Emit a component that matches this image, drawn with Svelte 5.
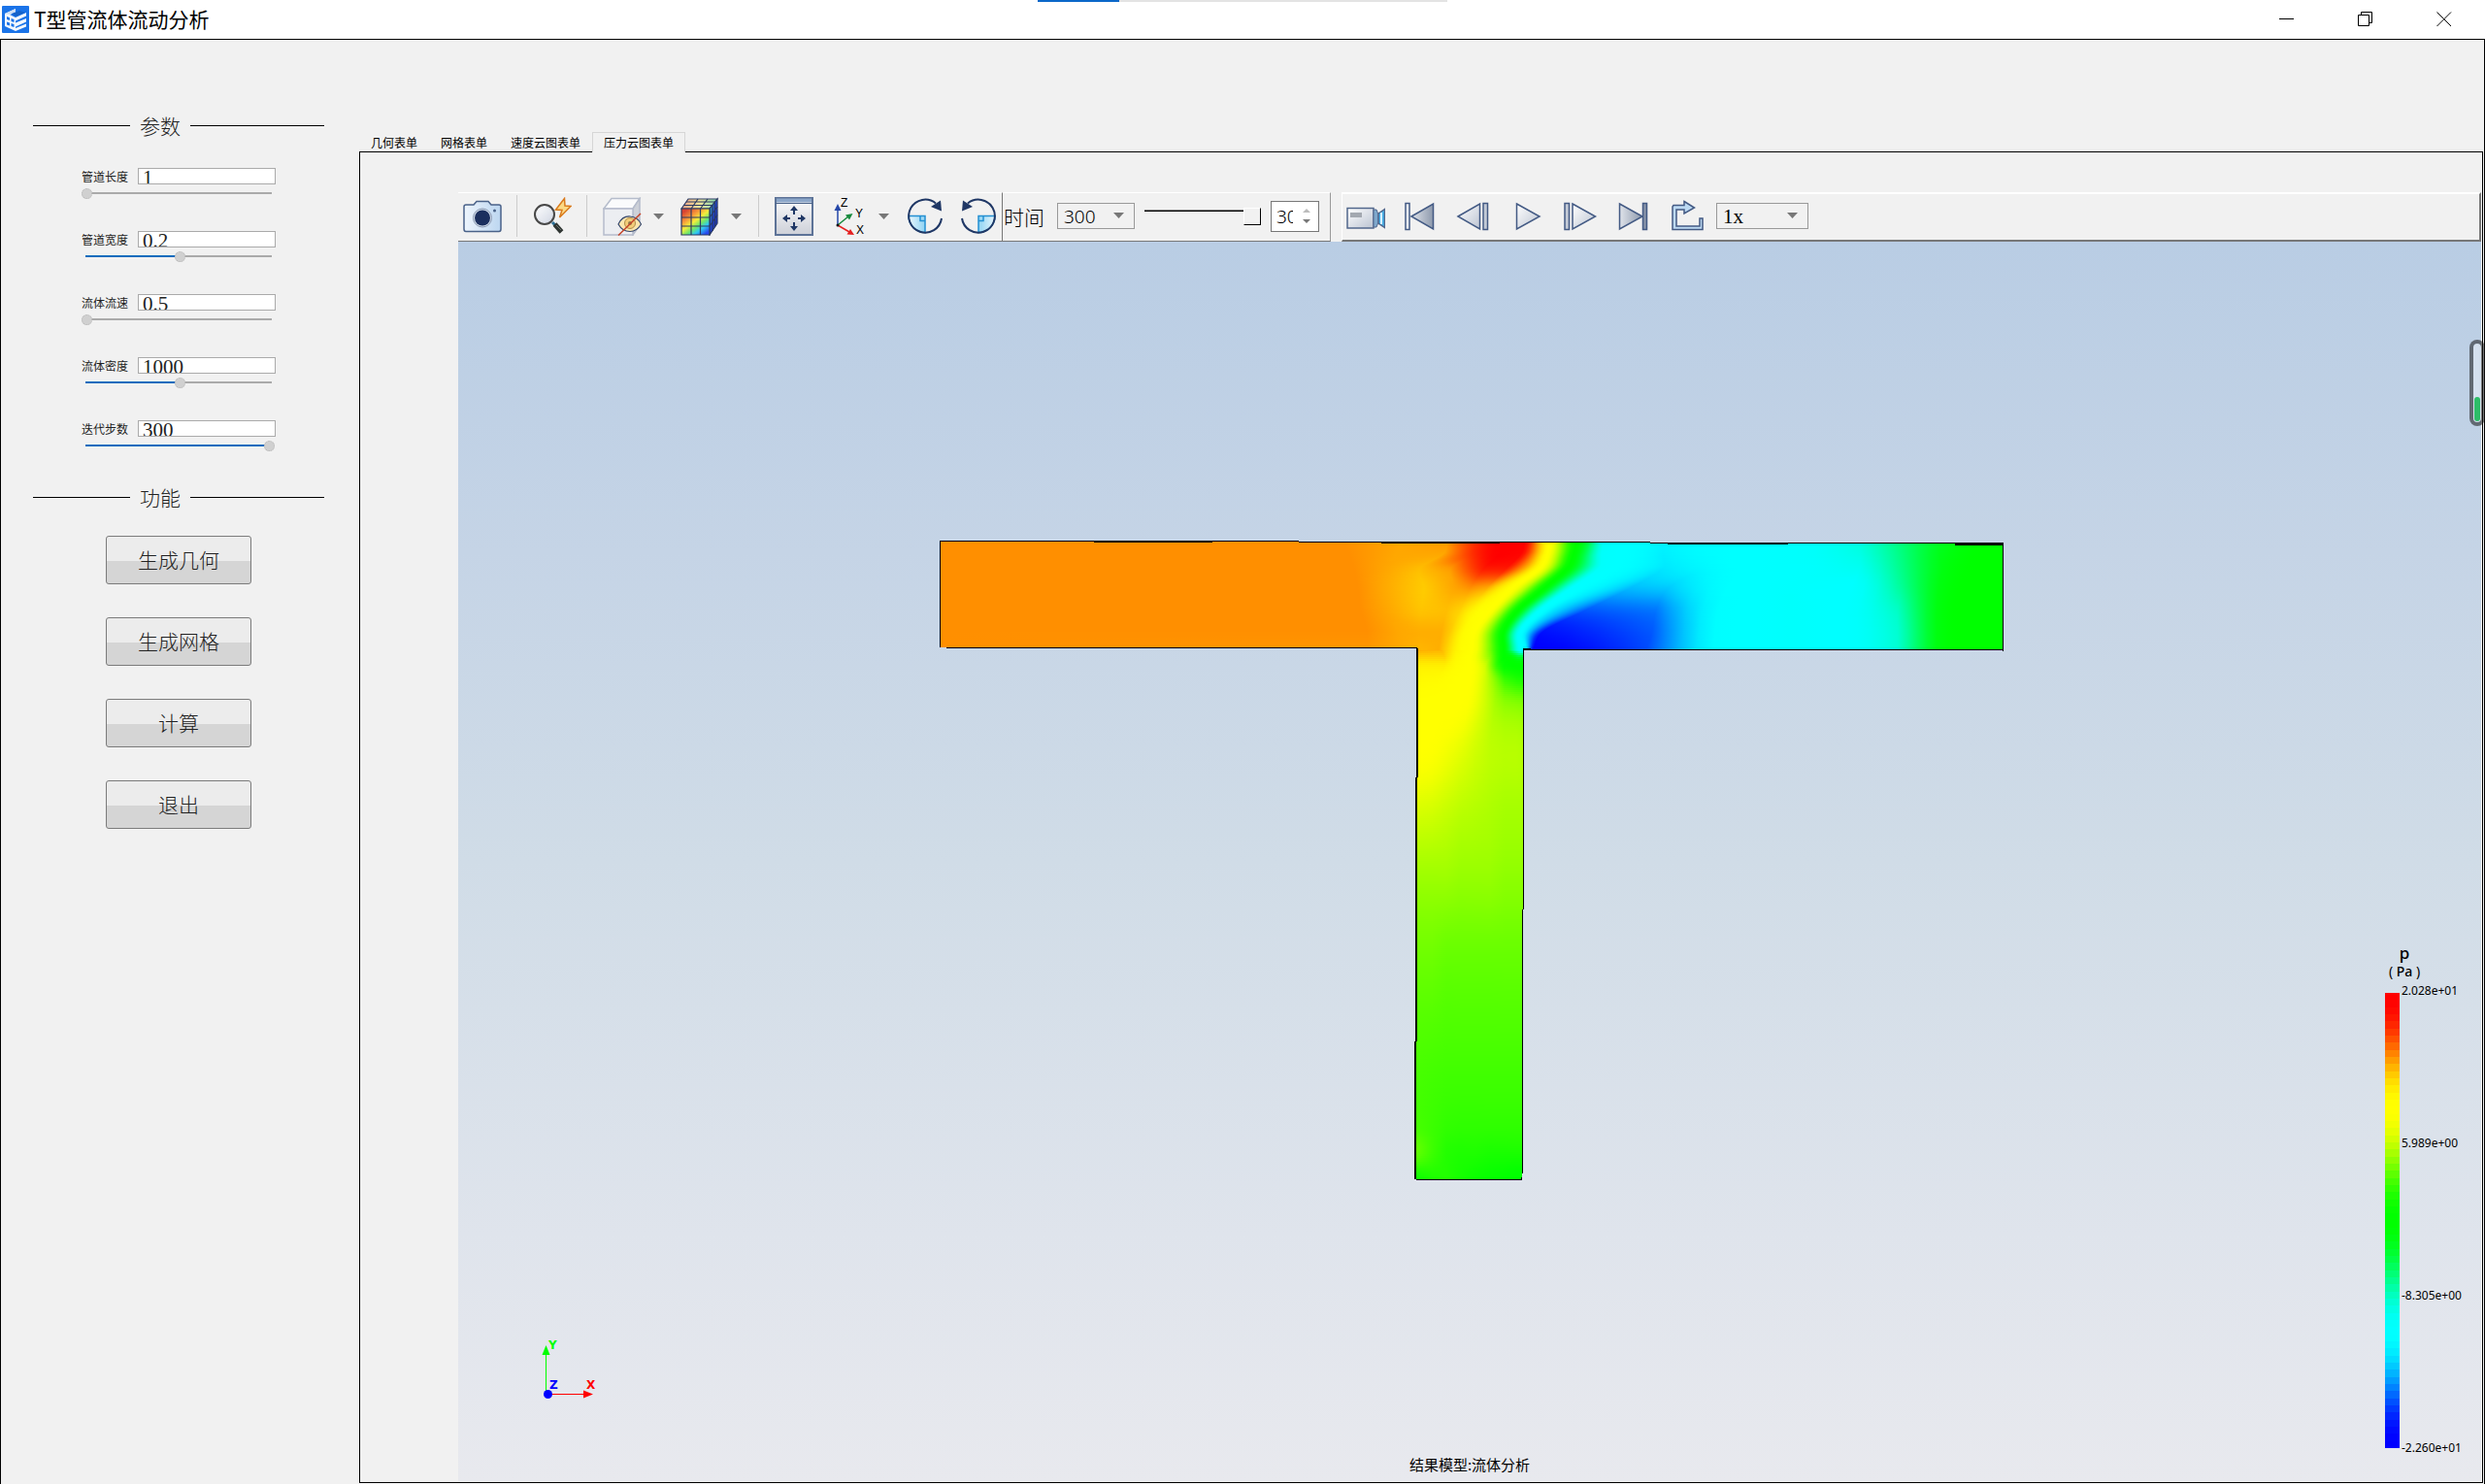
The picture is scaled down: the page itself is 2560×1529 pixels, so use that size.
<script lang="ts">
  type Sample = [number, number];
  type Row = { y: number; samples: Sample[] };

  let params = $state([
    { id: 'length', label: '管道长度', value: '1', position: 0 },
    { id: 'width', label: '管道宽度', value: '0.2', position: 51 },
    { id: 'velocity', label: '流体流速', value: '0.5', position: 0 },
    { id: 'density', label: '流体密度', value: '1000', position: 51 },
    { id: 'steps', label: '迭代步数', value: '300', position: 100 }
  ]);

  const actions = ['生成几何', '生成网格', '计算', '退出'];
  const tabs = ['几何表单', '网格表单', '速度云图表单', '压力云图表单'];
  let activeTab = $state(3);

  const legendLabels = ['2.028e+01', '5.989e+00', '-8.305e+00', '-2.260e+01'];
  const legendSteps = Array.from({ length: 64 }, (_, i) => 1 - i / 63);

  // blue, cyan, green, yellow, red with an eased blend between neighbours
  const palette = [
    [0, 0, 255],
    [0, 255, 255],
    [0, 255, 0],
    [255, 255, 0],
    [255, 0, 0]
  ];

  function colorAt(value: number) {
    const scaled = Math.min(Math.max(value, 0), 1) * 4;
    const index = Math.min(Math.floor(scaled), 3);
    const blend = (1 - Math.cos(Math.PI * (scaled - index))) / 2;
    const rgb = palette[index].map((c, i) => Math.round(c + (palette[index + 1][i] - c) * blend));
    return `rgb(${rgb.join(',')})`;
  }

  // normalised pressure along horizontal cuts: [x, value]
  const pipeRows: Row[] = [
    { y: 557, samples: [[968, 0.865], [1385, 0.865], [1444, 0.85], [1491, 0.86], [1519, 0.93], [1549, 1], [1571, 0.99], [1584, 0.86], [1596, 0.75], [1607, 0.65], [1624, 0.5], [1636, 0.42], [1652, 0.28], [1676, 0.25], [1713, 0.215], [1751, 0.235], [1798, 0.25], [1869, 0.27], [1916, 0.31], [1959, 0.38], [1997, 0.44], [2048, 0.5], [2064, 0.5]] },
    { y: 570, samples: [[968, 0.865], [1390, 0.865], [1438, 0.85], [1487, 0.85], [1517, 0.93], [1545, 1], [1567, 0.98], [1581, 0.86], [1594, 0.75], [1605, 0.65], [1621, 0.5], [1634, 0.4], [1650, 0.27], [1672, 0.25], [1713, 0.21], [1751, 0.23], [1794, 0.25], [1869, 0.27], [1916, 0.3], [1959, 0.375], [1998, 0.45], [2042, 0.5], [2064, 0.5]] },
    { y: 585, samples: [[968, 0.865], [1395, 0.865], [1430, 0.85], [1463, 0.835], [1495, 0.86], [1529, 0.95], [1552, 0.95], [1572, 0.84], [1586, 0.75], [1598, 0.65], [1614, 0.5], [1628, 0.4], [1647, 0.27], [1666, 0.245], [1713, 0.2], [1751, 0.22], [1792, 0.25], [1869, 0.265], [1916, 0.285], [1959, 0.37], [2001, 0.46], [2034, 0.5], [2064, 0.5]] },
    { y: 605, samples: [[968, 0.865], [1399, 0.865], [1433, 0.845], [1467, 0.825], [1497, 0.85], [1515, 0.865], [1532, 0.85], [1545, 0.8], [1559, 0.75], [1572, 0.66], [1591, 0.5], [1605, 0.38], [1619, 0.265], [1638, 0.23], [1680, 0.165], [1719, 0.175], [1780, 0.245], [1846, 0.265], [1907, 0.25], [1959, 0.36], [1997, 0.46], [2025, 0.5], [2064, 0.5]] },
    { y: 628, samples: [[968, 0.865], [1402, 0.865], [1430, 0.85], [1464, 0.83], [1490, 0.835], [1504, 0.82], [1515, 0.79], [1524, 0.765], [1536, 0.75], [1549, 0.64], [1564, 0.5], [1575, 0.38], [1586, 0.265], [1600, 0.2], [1634, 0.1], [1706, 0.12], [1770, 0.24], [1846, 0.268], [1900, 0.25], [1955, 0.33], [1995, 0.46], [2018, 0.5], [2064, 0.5]] },
    { y: 650, samples: [[968, 0.865], [1408, 0.865], [1440, 0.85], [1464, 0.845], [1485, 0.845], [1494, 0.825], [1501, 0.8], [1508, 0.77], [1520, 0.75], [1535, 0.63], [1549, 0.5], [1557, 0.38], [1565, 0.27], [1573, 0.2], [1590, 0.04], [1702, 0.1], [1767, 0.24], [1846, 0.268], [1900, 0.25], [1955, 0.32], [1995, 0.46], [2018, 0.5], [2064, 0.5]] },
    { y: 669, samples: [[968, 0.865], [1408, 0.86], [1440, 0.85], [1464, 0.84], [1482, 0.845], [1490, 0.82], [1498, 0.79], [1505, 0.765], [1517, 0.75], [1535, 0.62], [1549, 0.5], [1557, 0.38], [1565, 0.27], [1572, 0.22], [1579, 0], [1696, 0.09], [1765, 0.235], [1846, 0.268], [1900, 0.25], [1955, 0.32], [1995, 0.46], [2018, 0.5], [2064, 0.5]] }
  ];

  const branchRows: Row[] = [
    { y: 669, samples: [[1456, 0.845], [1485, 0.84], [1500, 0.785], [1517, 0.75], [1535, 0.62], [1549, 0.5], [1558, 0.38], [1566, 0.27], [1572, 0.25]] },
    { y: 676, samples: [[1456, 0.82], [1488, 0.82], [1500, 0.775], [1515, 0.75], [1535, 0.63], [1549, 0.5], [1556, 0.48], [1564, 0.43], [1572, 0.42]] },
    { y: 685, samples: [[1456, 0.79], [1488, 0.79], [1500, 0.765], [1515, 0.75], [1530, 0.68], [1542, 0.57], [1550, 0.52], [1562, 0.5], [1572, 0.49]] },
    { y: 700, samples: [[1456, 0.775], [1480, 0.77], [1500, 0.755], [1515, 0.745], [1530, 0.68], [1542, 0.62], [1550, 0.58], [1562, 0.56], [1572, 0.55]] },
    { y: 725, samples: [[1456, 0.755], [1480, 0.75], [1500, 0.75], [1512, 0.735], [1526, 0.69], [1540, 0.65], [1550, 0.635], [1562, 0.63], [1572, 0.625]] },
    { y: 770, samples: [[1456, 0.75], [1475, 0.74], [1490, 0.72], [1505, 0.7], [1520, 0.68], [1535, 0.665], [1550, 0.66], [1562, 0.66], [1572, 0.655]] },
    { y: 830, samples: [[1456, 0.69], [1475, 0.685], [1490, 0.675], [1505, 0.665], [1520, 0.66], [1535, 0.655], [1550, 0.65], [1562, 0.65], [1572, 0.65]] },
    { y: 900, samples: [[1456, 0.645], [1475, 0.645], [1490, 0.645], [1505, 0.64], [1520, 0.64], [1535, 0.64], [1550, 0.635], [1562, 0.635], [1572, 0.635]] },
    { y: 980, samples: [[1456, 0.615], [1475, 0.615], [1490, 0.61], [1505, 0.61], [1520, 0.61], [1535, 0.61], [1550, 0.61], [1562, 0.61], [1572, 0.61]] },
    { y: 1100, samples: [[1456, 0.59], [1475, 0.587], [1490, 0.585], [1505, 0.585], [1520, 0.585], [1535, 0.585], [1550, 0.585], [1562, 0.585], [1572, 0.585]] },
    { y: 1160, samples: [[1456, 0.59], [1475, 0.58], [1490, 0.572], [1505, 0.57], [1520, 0.57], [1535, 0.57], [1550, 0.57], [1562, 0.57], [1572, 0.57]] },
    { y: 1188, samples: [[1456, 0.61], [1475, 0.58], [1490, 0.56], [1505, 0.555], [1520, 0.555], [1535, 0.55], [1550, 0.55], [1562, 0.55], [1572, 0.55]] },
    { y: 1216, samples: [[1456, 0.52], [1475, 0.55], [1490, 0.56], [1505, 0.545], [1520, 0.53], [1535, 0.52], [1550, 0.51], [1562, 0.5], [1572, 0.5]] }
  ];

  const mix = (a: number, b: number, t: number) => a + (b - a) * t;

  // cubic Hermite blend of one sample coordinate between row i and row i + 1
  function blendRows(rows: Row[], i: number, t: number, column: number, part: 0 | 1) {
    const get = (n: number) => rows[n].samples[column][part];
    const slope = (n: number) => {
      const a = Math.max(n - 1, 0);
      const b = Math.min(n + 1, rows.length - 1);
      return (get(b) - get(a)) / (rows[b].y - rows[a].y);
    };
    const span = rows[i + 1].y - rows[i].y;
    const t2 = t * t;
    const t3 = t2 * t;
    return (
      (2 * t3 - 3 * t2 + 1) * get(i) +
      (t3 - 2 * t2 + t) * span * slope(i) +
      (3 * t2 - 2 * t3) * get(i + 1) +
      (t3 - t2) * span * slope(i + 1)
    );
  }

  function buildStrips(rows: Row[], step: number) {
    const first = rows[0].y;
    const last = rows[rows.length - 1].y;
    const left = rows[0].samples[0][0];
    const right = rows[0].samples[rows[0].samples.length - 1][0];
    const strips = [];

    for (let y = first; y < last; y += step) {
      const above = rows.findIndex((row) => row.y > y) - 1;
      const t = (y - rows[above].y) / (rows[above + 1].y - rows[above].y);
      const samples = rows[0].samples.map((_, column) => [
        blendRows(rows, above, t, column, 0),
        blendRows(rows, above, t, column, 1)
      ]);

      const stops = [];
      samples.forEach(([x, v], i) => {
        const [nextX, nextV] = samples[i + 1] ?? [x, v];
        for (const part of [0, 0.25, 0.5, 0.75]) {
          stops.push({
            offset: (mix(x, nextX, part) - left) / (right - left),
            color: colorAt(mix(v, nextV, part))
          });
        }
      });
      strips.push({ y, left, width: right - left, height: step, stops });
    }
    return strips;
  }

  const strips = [...buildStrips(branchRows, 2), ...buildStrips(pipeRows, 1)];
  const outline = '968,557 2063,560 2063,670 1570,669 1568,1216 1458,1215 1460,668 968,667';
</script>

{#snippet caret()}
  <svg class="caret" viewBox="0 0 13 8" aria-hidden="true">
    <path d="M1 1H12L6.500 7Z" fill="#777" />
  </svg>
{/snippet}

<div class="window">
  <div class="loading"><span></span></div>

  <header class="titlebar">
    <svg class="logo" viewBox="0 0 28 28" aria-hidden="true">
      <rect width="28" height="28" rx="1" fill="#1a73e8" />
      <path d="M3 8 14 3V6.500L8 9 14 12 25 7V10.500L14 15.500V17.500L25 13V16.500L14 21.500V23L25 18.500V21.500L14 26 3 21Z" fill="#f4f8fd" />
      <path d="M5 11 8 12.200V15L5 14ZM9.500 13 12.500 14V17L9.500 16ZM5 16.500 8 17.500V20.500L5 19.500ZM9.500 18 12.500 19V22L9.500 21Z" fill="#1a73e8" />
      <path d="M3 8 14 3V6.500L8 9Z" fill="#cfe0f5" />
      <path d="M10 8 18 5 24 7 14 11Z" fill="#1663c9" />
    </svg>
    <h1>T型管流体流动分析</h1>
    <div class="window-buttons">
      <button aria-label="最小化">
        <svg viewBox="0 0 16 16"><path d="M0 7.500H15" /></svg>
      </button>
      <button aria-label="还原">
        <svg viewBox="0 0 16 16"><path d="M.5 3.500H11.500V14.500H.5ZM3.500 3.500V.5H14.500V11.500H11.500" /></svg>
      </button>
      <button aria-label="关闭">
        <svg viewBox="0 0 16 16"><path d="M.5 .5 15 15M15 .5 .5 15" /></svg>
      </button>
    </div>
  </header>

  <div class="body">
    <aside>
      <h2>参数</h2>
      <div class="fields">
        {#each params as param}
          <div class="field">
            <label for={param.id}>{param.label}</label>
            <input class="value" id={param.id} type="text" bind:value={param.value} />
            <input
              class="range"
              type="range"
              min="0"
              max="100"
              aria-label={param.label}
              bind:value={param.position}
              style="--fill: {param.position}%"
            />
          </div>
        {/each}
      </div>

      <h2>功能</h2>
      <div class="actions">
        {#each actions as action}
          <button>{action}</button>
        {/each}
      </div>
    </aside>

    <main>
      <div class="tabs" role="tablist">
        {#each tabs as tab, i}
          <button
            role="tab"
            aria-selected={i === activeTab}
            class:active={i === activeTab}
            onclick={() => (activeTab = i)}
          >{tab}</button>
        {/each}
      </div>

      <div class="pane">
        <div class="toolbars">
          <div class="toolbar view-tools">
            <button aria-label="截图">
              <svg viewBox="0 0 40 40">
                <defs>
                  <linearGradient id="camera" x1="0" y1="0" x2="1" y2="0">
                    <stop offset="0" stop-color="#eef5fd" />
                    <stop offset="1" stop-color="#bcd6f0" />
                  </linearGradient>
                </defs>
                <path d="M3 8H11L14 4.500H26L29 8H37Q39 8 39 10V33Q39 35.500 37 35.500H3Q1 35.500 1 33V10Q1 8 3 8Z" fill="url(#camera)" stroke="#4a6289" stroke-width="1.500" />
                <circle cx="20" cy="21.500" r="9.500" fill="#d3deeb" stroke="#8796b0" />
                <circle cx="20" cy="21.500" r="8" fill="#1b2f5e" />
                <circle cx="32.500" cy="14" r="1.500" fill="#4a6289" />
              </svg>
            </button>
            <span class="separator"></span>
            <button aria-label="快速缩放">
              <svg viewBox="0 0 40 40">
                <defs>
                  <linearGradient id="glass" x1="0" y1="0" x2="1" y2="1">
                    <stop offset="0" stop-color="#fff" />
                    <stop offset="1" stop-color="#cfd5e2" />
                  </linearGradient>
                </defs>
                <path d="M20 26 23 29" stroke="#2b6f96" stroke-width="3" />
                <path d="M22.500 28 29.500 36" stroke="#2f3532" stroke-width="5" />
                <path d="M24 29 29 34" stroke="#6d746f" stroke-width="1" />
                <circle cx="12" cy="18" r="10" fill="url(#glass)" stroke="#474747" stroke-width="2" />
                <path d="M32.500 1.500 23.500 13 30 13.500 27.500 21 39 9.500 33 9Z" fill="#fbd984" stroke="#d97a1c" stroke-width="1.500" />
              </svg>
            </button>
            <span class="separator"></span>
            <div class="dropdown">
              <button aria-label="显示与隐藏">
                <svg viewBox="0 0 40 40">
                  <path d="M1 12 9 1.500H38L31 12Z" fill="#fafbfc" stroke="#b5bccb" stroke-width="1.500" />
                  <path d="M31 12 38 1.500V29L31 39Z" fill="#cdd1d8" stroke="#b5bccb" stroke-width="1.500" />
                  <path d="M1 12H31V39H1Z" fill="#eceef2" stroke="#b5bccb" stroke-width="1.500" />
                  <path d="M16 28Q20 19.500 28 20Q36 20.500 39.500 28Q35 35.500 28 35.500Q20 35.500 16 28Z" fill="#fbe6ae" stroke="#35476e" stroke-width="1.200" />
                  <circle cx="28" cy="27" r="5.500" fill="#f3cd79" stroke="#b08d4a" />
                  <circle cx="28" cy="27" r="2" fill="#8f7b4e" />
                  <path d="M16 39.500 39 17" stroke="#c4452a" stroke-width="1.500" />
                </svg>
              </button>
              <button class="more" aria-label="更多显示选项">{@render caret()}</button>
            </div>
            <div class="dropdown">
              <button aria-label="云图">
                <svg viewBox="0 0 40 40">
                  <defs>
                    <linearGradient id="front" x1="0" y1="0" x2=".8" y2="1">
                      <stop offset=".12" stop-color="#d94432" />
                      <stop offset=".35" stop-color="#f79a3a" />
                      <stop offset=".52" stop-color="#f4ee3c" />
                      <stop offset=".68" stop-color="#6fe66a" />
                      <stop offset=".82" stop-color="#2fc9f2" />
                      <stop offset="1" stop-color="#2a49ee" />
                    </linearGradient>
                    <linearGradient id="lid">
                      <stop offset="0" stop-color="#ee9f86" />
                      <stop offset=".5" stop-color="#f3e49a" />
                      <stop offset="1" stop-color="#7fd8b0" />
                    </linearGradient>
                    <linearGradient id="side" x1="0" y1="0" x2="1" y2="1">
                      <stop offset="0" stop-color="#3bc3a0" />
                      <stop offset=".5" stop-color="#2143d8" />
                      <stop offset="1" stop-color="#1324a0" />
                    </linearGradient>
                  </defs>
                  <g stroke="#2b3a63" stroke-width="1.200">
                    <path d="M1 12 8 2H38L30 12Z" fill="url(#lid)" />
                    <path d="M30 12 38 2V27L30 39Z" fill="url(#side)" />
                    <path d="M1 12H30V39H1Z" fill="url(#front)" />
                    <path d="M11 12V39M20.500 12V39M1 21H30L38 10M1 30H30L38 18.500M11 12 18 2M20.500 12 28 2M4 8.500H33V35M6 5H35.500V31" fill="none" />
                  </g>
                </svg>
              </button>
              <button class="more" aria-label="更多云图选项">{@render caret()}</button>
            </div>
            <span class="separator"></span>
            <button aria-label="适应窗口">
              <svg viewBox="0 0 40 40">
                <defs>
                  <linearGradient id="fit" x1="0" y1="0" x2="0" y2="1">
                    <stop offset="0" stop-color="#fbfbfc" />
                    <stop offset="1" stop-color="#cdd0d8" />
                  </linearGradient>
                </defs>
                <rect x="1" y="1" width="38" height="38" fill="url(#fit)" stroke="#5d7397" stroke-width="2" />
                <path d="M2 3.500H38" stroke="#8ba6c9" stroke-width="4" />
                <path d="M1 6.500H39" stroke="#4a6289" />
                <path d="M20 12V18M20 26V32M10 22H16M24 22H30" stroke="#1f3765" stroke-width="2" />
                <path d="M20 9 24 14H16ZM20 35 24 30H16ZM8 22 13 18V26ZM32 22 27 18V26Z" fill="#1f3765" />
              </svg>
            </button>
            <div class="dropdown">
              <button aria-label="视图方向">
                <svg viewBox="0 0 40 40">
                  <path d="M10 29V12" stroke="#2547a8" stroke-width="1.500" />
                  <path d="M10 7 13.500 14H6.500Z" fill="#2547a8" />
                  <path d="M10 29 21 20" stroke="#168a3c" stroke-width="1.500" />
                  <path d="M25.500 17 22 23.500 18 18.500Z" fill="#168a3c" />
                  <path d="M10 29 22 36" stroke="#e52020" stroke-width="1.500" />
                  <path d="M27 39 19.500 38.500 23 33Z" fill="#e52020" />
                  <circle cx="10" cy="29" r="1.500" fill="#111" />
                  <g class="axis-letters">
                    <text x="13" y="10">Z</text>
                    <text x="28" y="21">Y</text>
                    <text x="29" y="38">X</text>
                  </g>
                </svg>
              </button>
              <button class="more" aria-label="更多视图方向">{@render caret()}</button>
            </div>
            {#each ['顺时针旋转', '逆时针旋转'] as label, i}
              <button aria-label={label}>
                <svg viewBox="0 0 40 40" class:mirrored={i === 1}>
                  <defs>
                    <linearGradient id="wedge{i}">
                      <stop offset="0" stop-color="#eaf7fd" />
                      <stop offset="1" stop-color="#8fd3f3" />
                    </linearGradient>
                  </defs>
                  <path d="M20 19.500H3A17 17 0 0 0 20 36.500Z" fill="url(#wedge{i})" stroke="#2490d2" stroke-width="1.500" />
                  <path d="M15 19.500V24.500H20" fill="none" stroke="#2490d2" stroke-width="1.500" />
                  <path d="M37 22A17 17 0 1 1 31 6.500" fill="none" stroke="#1f3765" stroke-width="2" />
                  <path d="M36 3.500 37 14.500 26 10Z" fill="#1f3765" />
                </svg>
              </button>
            {/each}
          </div>

          <div class="toolbar time-tools">
            <label for="time">时间</label>
            <div class="select time">
              <select id="time"><option>300</option></select>
              {@render caret()}
            </div>
            <input class="time-slider" type="range" min="0" max="300" value="300" aria-label="时间步" />
            <div class="spin">
              <input type="text" value="300" aria-label="时间步数值" />
              <div class="spin-buttons">
                <button class="up" aria-label="增加" disabled></button>
                <button class="down" aria-label="减少"></button>
              </div>
            </div>
          </div>

          <div class="toolbar playback">
            <div class="players">
              <button aria-label="录制">
                <svg viewBox="0 0 40 40">
                  <defs>
                    <linearGradient id="metal" x1="0" y1="0" x2="1" y2="1">
                      <stop offset="0" stop-color="#fff" />
                      <stop offset="1" stop-color="#bcc4d2" />
                    </linearGradient>
                    <linearGradient id="steel">
                      <stop offset="0" stop-color="#dfe3ea" />
                      <stop offset="1" stop-color="#8d99ac" />
                    </linearGradient>
                  </defs>
                  <rect x="1" y="11.500" width="27" height="20.500" fill="url(#metal)" stroke="#52678c" stroke-width="1.500" />
                  <rect x="4" y="16" width="12" height="5" fill="#a3a8b0" />
                  <path d="M28 13H31L33 18V26L31 31H28Z" fill="#7fa8cc" stroke="#52678c" />
                  <path d="M33 17 39.500 12.500V31.500L33 27Z" fill="#49b1e8" stroke="#52678c" stroke-width="1.500" />
                  <path d="M36 16V28" stroke="#d8f1fd" stroke-width="2" />
                </svg>
              </button>
              <button aria-label="第一帧">
                <svg viewBox="0 0 40 40" class="play-icon">
                  <path d="M6 6.500H10V33.500H6Z" fill="#eef0f4" />
                  <path d="M12 20 34.500 7V33Z" fill="url(#steel)" />
                </svg>
              </button>
              <button aria-label="上一帧">
                <svg viewBox="0 0 40 40" class="play-icon">
                  <path d="M5 20 27.500 7V33Z" fill="url(#metal)" />
                  <path d="M31 6.500H35.500V33.500H31Z" fill="#c3cad6" />
                </svg>
              </button>
              <button aria-label="播放">
                <svg viewBox="0 0 40 40" class="play-icon">
                  <path d="M10.500 7 34 20 10.500 33Z" fill="url(#metal)" />
                </svg>
              </button>
              <button aria-label="下一帧">
                <svg viewBox="0 0 40 40" class="play-icon">
                  <path d="M5 6.500H9.500V33.500H5Z" fill="#c3cad6" />
                  <path d="M13 7 36.500 20 13 33Z" fill="url(#metal)" />
                </svg>
              </button>
              <button aria-label="最后一帧">
                <svg viewBox="0 0 40 40" class="play-icon">
                  <path d="M6.500 7 30 20 6.500 33Z" fill="url(#steel)" />
                  <path d="M30.500 6.500H34.500V33.500H30.500Z" fill="#8793a8" />
                </svg>
              </button>
              <button aria-label="循环">
                <svg viewBox="0 0 40 40" class="play-icon">
                  <path d="M18 4.500 28.500 11 18 17V13H10V30H34V22H37V33.500H6V10L7 8.500H18Z" fill="#bcd9f2" />
                </svg>
              </button>
            </div>
            <div class="select speed">
              <select aria-label="播放速度"><option>1x</option></select>
              {@render caret()}
            </div>
          </div>
        </div>

        <div class="viewport">
          <svg class="scene" viewBox="472 249 2084 1277" role="img" aria-label="压力云图">
            <defs>
              <clipPath id="pipe"><polygon points={outline} /></clipPath>
              {#each strips as strip, i}
                <linearGradient id="strip{i}">
                  {#each strip.stops as stop}
                    <stop offset={stop.offset} stop-color={stop.color} />
                  {/each}
                </linearGradient>
              {/each}
            </defs>
            <g clip-path="url(#pipe)" shape-rendering="crispEdges">
              {#each strips as strip, i}
                <rect x={strip.left} y={strip.y} width={strip.width} height={strip.height + 1} fill="url(#strip{i})" />
              {/each}
            </g>
            <polygon class="edge" points={outline} />
            <path class="edge thick" d="M1460 668 1458 1215M1127 558H1249M1423 559H1545M1718 560H1842M2014 561H2063" />

            <g class="triad">
              <path d="M562.500 1436V1394" stroke="#0f0" />
              <path d="M562.500 1386 566.500 1396H558.500Z" fill="#0f0" />
              <path d="M568 1436.500H602" stroke="red" />
              <path d="M611 1436.500 601 1440.500V1432.500Z" fill="red" />
              <circle cx="564.500" cy="1436.500" r="4.500" fill="#00f" />
              <text x="565" y="1390" fill="#0f0">Y</text>
              <text x="604" y="1431" fill="red">X</text>
              <text x="566" y="1431" fill="#00f">Z</text>
            </g>
          </svg>

          <div class="legend">
            <div class="legend-title">
              <span class="quantity">p</span>
              <span>( <b>Pa</b> )</span>
            </div>
            <div class="legend-scale">
              <div class="colors">
                {#each legendSteps as step}
                  <i style="background: {colorAt(step)}"></i>
                {/each}
              </div>
              <div class="legend-labels">
                {#each legendLabels as label}
                  <span>{label}</span>
                {/each}
              </div>
            </div>
          </div>

          <p class="caption">结果模型:流体分析</p>
        </div>
      </div>
    </main>
  </div>

  <div class="gauge"><span></span></div>
</div>

<style>
  :global(body) {
    background: #f1f1f1;
  }

  .window {
    position: relative;
    display: flex;
    flex-direction: column;
    min-height: 100vh;
    box-sizing: border-box;
    overflow: hidden;
    background: #f1f1f1;
    color: #000;
    font-family: 'Noto Sans CJK SC', 'Noto Sans', sans-serif;
  }

  button,
  input,
  select {
    margin: 0;
    padding: 0;
    border: 0;
    background: none;
    color: inherit;
    font: inherit;
    box-sizing: border-box;
  }

  svg {
    display: block;
    flex: none;
  }

  .loading {
    position: absolute;
    top: 0;
    left: 50%;
    width: 422px;
    height: 2px;
    margin-left: -211px;
    background: #e3e3e3;
  }

  .loading span {
    display: block;
    width: 20%;
    height: 100%;
    background: #0b67c9;
  }

  .titlebar {
    display: flex;
    align-items: center;
    height: 40px;
    padding-left: 2px;
    background: #fff;
  }

  .logo {
    width: 28px;
    height: 28px;
  }

  h1 {
    flex: 1;
    margin: 0 0 0 5px;
    padding-bottom: 2px;
    font-size: 21px;
    font-weight: 400;
    line-height: 30px;
  }

  .window-buttons {
    display: flex;
    padding-right: 2px;
  }

  .window-buttons button {
    display: flex;
    align-items: center;
    justify-content: center;
    width: 81px;
    height: 40px;
  }

  .window-buttons svg {
    width: 16px;
    height: 16px;
    fill: none;
    stroke: #000;
  }

  .body {
    display: flex;
    flex: 1;
    border: 1px solid #000;
    border-bottom: 0;
  }

  aside {
    flex: none;
    width: 369px;
    box-sizing: border-box;
    padding: 73px 36px 0 33px;
  }

  h2 {
    display: flex;
    align-items: center;
    gap: 10px;
    margin: 0;
    color: #222;
    font-size: 21px;
    font-weight: 300;
    line-height: 30px;
  }

  h2::before,
  h2::after {
    content: '';
    width: 100px;
    height: 1px;
    background: #000;
  }

  h2::after {
    flex: 1;
  }

  .fields {
    display: flex;
    flex-direction: column;
    gap: 33px;
    margin: 29px 0 32px;
    padding-left: 50px;
  }

  .field {
    display: grid;
    grid-template-columns: 48px 142px;
    gap: 4px 10px;
  }

  .field label {
    color: #222;
    font-size: 12px;
    line-height: 17px;
    white-space: nowrap;
  }

  .value {
    height: 17px;
    padding: 3px 4px 0;
    border: 1px solid #aaa;
    background: #fff;
    color: #222;
    font-family: 'Liberation Serif', serif;
    font-size: 21px;
    line-height: 26px;
  }

  .range {
    grid-column: 1 / -1;
    width: 199px;
    height: 11px;
    appearance: none;
    background:
      linear-gradient(to right, #0f6cbd var(--fill), #aaa var(--fill)) 4px 4px / 192px 2px no-repeat;
  }

  .range::-webkit-slider-thumb {
    width: 11px;
    height: 11px;
    appearance: none;
    border: 1px dotted #b5b5b5;
    border-radius: 50%;
    background: #d0d0d0;
  }

  .actions {
    display: flex;
    flex-direction: column;
    align-items: center;
    gap: 34px;
    margin-top: 25px;
  }

  .actions button {
    width: 150px;
    height: 50px;
    padding-bottom: 3px;
    border: 1px solid #7b7b7b;
    border-radius: 3px;
    background: linear-gradient(#ececec 52%, #d5d5d5 52%);
    color: #222;
    font-size: 21px;
    font-weight: 300;
    line-height: 30px;
  }

  main {
    display: flex;
    flex: 1;
    flex-direction: column;
    min-width: 0;
    padding: 95px 1px 1px 0;
  }

  .tabs {
    display: flex;
    height: 20px;
  }

  .tabs button {
    padding: 0 11px;
    border: 1px solid transparent;
    border-bottom: 0;
    font-size: 12px;
    line-height: 20px;
  }

  .tabs .active {
    z-index: 1;
    height: 21px;
    border-color: #d6d6d6;
    background: #f1f1f1;
  }

  .pane {
    display: flex;
    flex: 1;
    flex-direction: column;
    padding: 41px 1px 1px 101px;
    border: 1px solid #000;
  }

  .toolbars {
    display: flex;
    height: 51px;
  }

  .toolbar {
    display: flex;
    align-items: center;
    box-sizing: border-box;
    padding-bottom: 2px;
    border-top: 1px solid #fff;
    border-bottom: 1px solid #777;
  }

  .toolbar button {
    display: block;
  }

  .toolbar button svg {
    width: 40px;
    height: 40px;
  }

  .toolbar .caret,
  .toolbar .more .caret {
    width: 13px;
    height: 8px;
  }

  .view-tools {
    gap: 15px;
    padding-right: 4px;
    padding-left: 5px;
    border-right: 1px solid #777;
  }

  .separator {
    width: 1px;
    height: 43px;
    margin-right: 1px;
    background: #ccc;
  }

  .dropdown {
    display: flex;
    align-items: center;
    gap: 11px;
    padding-right: 1px;
  }

  .axis-letters {
    font-family: 'Liberation Sans', sans-serif;
    font-size: 12px;
  }

  .mirrored {
    transform: scaleX(-1);
  }

  .time-tools {
    gap: 10px;
    padding-right: 11px;
    padding-left: 1px;
    border-right: 1px solid #999;
  }

  .time-tools label {
    padding-right: 3px;
    font-size: 21px;
    font-weight: 300;
    line-height: 30px;
    white-space: nowrap;
  }

  .select {
    position: relative;
    height: 27px;
  }

  .select select {
    width: 100%;
    height: 100%;
    padding: 0 6px;
    appearance: none;
    border: 1px solid #999;
    font-size: 19px;
    font-weight: 300;
  }

  .select .caret {
    position: absolute;
    top: 9px;
    right: 10px;
    pointer-events: none;
  }

  .time {
    width: 80px;
  }

  .time select {
    font-family: 'Noto Sans', sans-serif;
  }

  .speed {
    width: 95px;
  }

  .speed select {
    font-family: 'Liberation Serif', serif;
    font-size: 21px;
  }

  .time-slider {
    width: 120px;
    height: 20px;
    appearance: none;
    background: linear-gradient(#777 1px, #000 1px) 0 3px / 102px 2px no-repeat;
  }

  .time-slider::-webkit-slider-thumb {
    width: 18px;
    height: 18px;
    appearance: none;
    border: 1px solid;
    border-color: #fff #000 #000 #fff;
    background: #f1f1f1;
  }

  .spin {
    display: flex;
    justify-content: space-between;
    box-sizing: border-box;
    width: 50px;
    height: 32px;
    padding: 0 8px 0 5px;
    border: 1px solid #777;
    background: #fff;
  }

  .spin input {
    width: 17px;
    font-family: 'Noto Sans', sans-serif;
    font-size: 19px;
    font-weight: 300;
  }

  .spin-buttons {
    display: flex;
    flex-direction: column;
    justify-content: center;
    gap: 7px;
  }

  .spin-buttons button {
    border: 4px solid transparent;
  }

  .spin-buttons .up {
    border-top: 0;
    border-bottom-color: #bbb;
  }

  .spin-buttons .down {
    border-bottom: 0;
    border-top-color: #777;
  }

  .playback {
    flex: 1;
    gap: 11px;
    margin-left: 11px;
    padding-left: 4px;
    border-width: 2px 2px 2px 1px;
    border-style: solid;
    border-color: #fff #777 #777 #fff;
  }

  .players {
    display: flex;
    gap: 15px;
  }

  .play-icon {
    stroke: #435a84;
    stroke-width: 1.5;
  }

  .viewport {
    position: relative;
    flex: 1;
    background: linear-gradient(#b9cde4, #c5d4e6 25%, #d0dce7 50%, #dfe4ec 80%, #e8e9ee);
  }

  .scene {
    position: absolute;
    inset: 0;
    width: 100%;
    height: 100%;
  }

  .edge {
    fill: none;
    stroke: #000;
    stroke-width: 1;
    shape-rendering: crispEdges;
  }

  .thick {
    stroke-width: 2;
  }

  .triad {
    font-family: 'DejaVu Sans', sans-serif;
    font-size: 12px;
    font-weight: 700;
  }

  .legend {
    position: absolute;
    right: 0;
    bottom: 34px;
    width: 99px;
    font-family: 'Noto Sans', sans-serif;
  }

  .legend-title {
    display: flex;
    flex-direction: column;
    align-items: center;
    width: 40px;
    margin-bottom: 14px;
    font-size: 14px;
    line-height: 16px;
    white-space: nowrap;
  }

  .legend-title b {
    font-weight: 500;
  }

  .quantity {
    font-size: 17px;
    font-weight: 500;
    line-height: 22px;
  }

  .legend-scale {
    display: flex;
    gap: 2px;
    height: 469px;
  }

  .colors {
    display: flex;
    flex-direction: column;
    width: 15px;
  }

  .colors i {
    flex: 1;
  }

  .legend-labels {
    display: flex;
    flex-direction: column;
    justify-content: space-between;
    margin: -8px 0 -6px;
    font-size: 12px;
    line-height: 12px;
  }

  .caption {
    position: absolute;
    right: 0;
    bottom: 6px;
    left: 0;
    margin: 0;
    font-size: 15px;
    line-height: 22px;
    text-align: center;
  }

  .gauge {
    position: absolute;
    top: 350px;
    right: 0;
    display: flex;
    align-items: flex-end;
    justify-content: center;
    box-sizing: border-box;
    width: 16px;
    height: 89px;
    padding-bottom: 1px;
    border: 4px solid rgba(20, 20, 20, 0.55);
    border-radius: 8px;
    background: rgba(255, 255, 255, 0.35);
    background-clip: padding-box;
  }

  .gauge span {
    width: 6px;
    height: 25px;
    border-radius: 3px;
    background: #2dbd68;
  }
</style>
